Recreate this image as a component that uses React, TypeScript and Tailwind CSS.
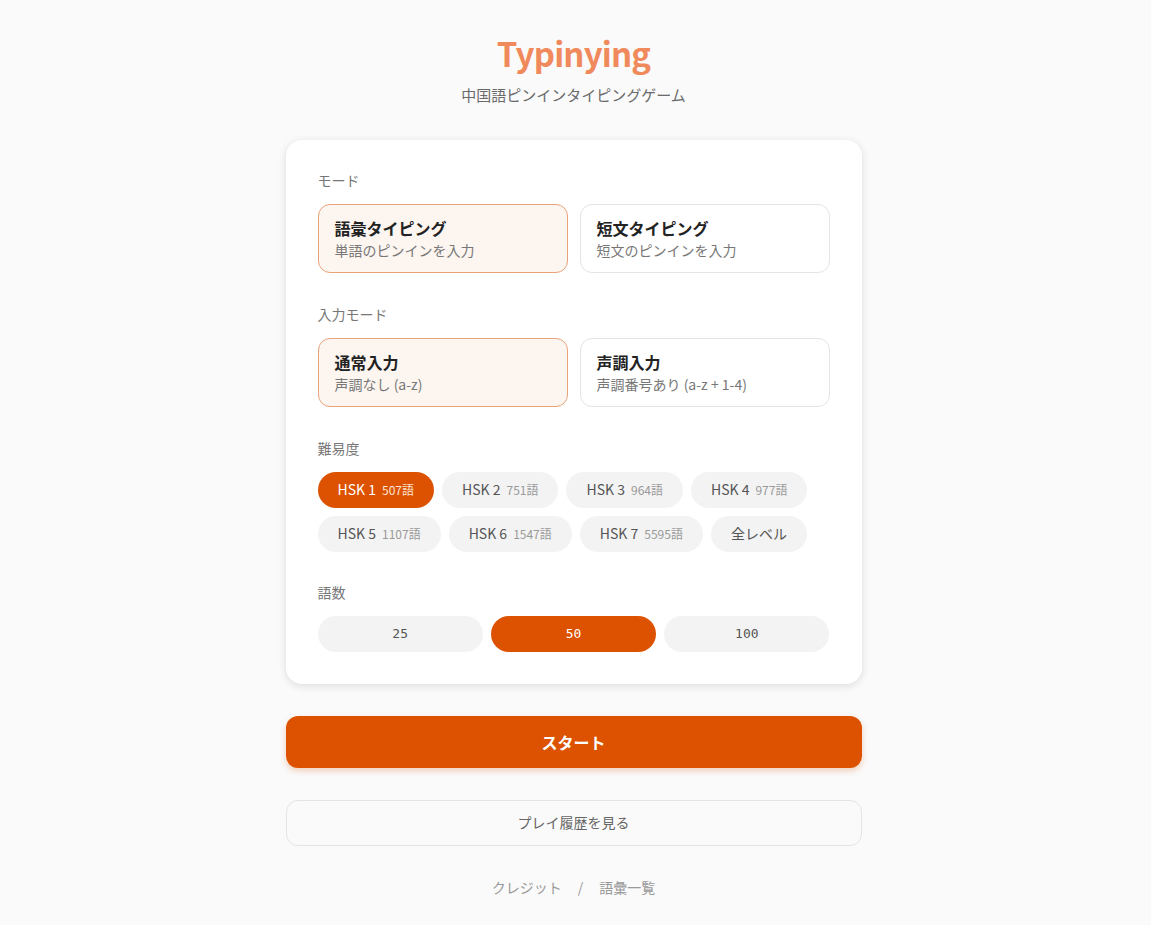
import { useState } from "react";

const modes = [
  { id: "vocab", title: "語彙タイピング", desc: "単語のピンインを入力" },
  { id: "sentence", title: "短文タイピング", desc: "短文のピンインを入力" },
];

const inputModes = [
  { id: "normal", title: "通常入力", desc: "声調なし (a-z)" },
  { id: "tone", title: "声調入力", desc: "声調番号あり (a-z + 1-4)" },
];

const levels = [
  { id: "1", label: "HSK 1", count: "507語" },
  { id: "2", label: "HSK 2", count: "751語" },
  { id: "3", label: "HSK 3", count: "964語" },
  { id: "4", label: "HSK 4", count: "977語" },
  { id: "5", label: "HSK 5", count: "1107語" },
  { id: "6", label: "HSK 6", count: "1547語" },
  { id: "7", label: "HSK 7", count: "5595語" },
  { id: "all", label: "全レベル", count: "" },
];

const counts = [25, 50, 100];

function OptionCard({
  title,
  desc,
  active,
  onClick,
}: {
  title: string;
  desc: string;
  active: boolean;
  onClick: () => void;
}) {
  return (
    <button
      onClick={onClick}
      className={`text-left rounded-xl border px-4 h-[69px] flex flex-col justify-center ${
        active
          ? "border-[#e9a27a] bg-[#fcf5f0]"
          : "border-[#e4e4e4] bg-white"
      }`}
    >
      <div className="text-[16px] font-bold text-[#222] leading-6">{title}</div>
      <div className="text-[14px] text-[#777] leading-5">{desc}</div>
    </button>
  );
}

export default function App() {
  const [mode, setMode] = useState("vocab");
  const [inputMode, setInputMode] = useState("normal");
  const [level, setLevel] = useState("1");
  const [count, setCount] = useState(50);

  return (
    <div
      className="min-h-screen bg-[#fafafa] flex flex-col items-center pt-[30px] pb-10 pr-[4px]"
      style={{ fontFamily: '"Noto Sans CJK JP", "Noto Sans", sans-serif' }}
    >
      <h1 className="text-[33px] font-semibold text-[#f08a5d] leading-[46px] tracking-tight">
        Typinying
      </h1>
      <p className="text-[15px] text-[#6a6a6a] mt-[8px]">中国語ピンインタイピングゲーム</p>

      <div className="w-[576px] mt-[33px] bg-white rounded-2xl shadow-[0_2px_8px_rgba(0,0,0,0.12)] px-8 pt-[30px] pb-8">
        <div className="text-[14px] text-[#777] leading-5">モード</div>
        <div className="grid grid-cols-2 gap-3 mt-[14px]">
          {modes.map((m) => (
            <OptionCard
              key={m.id}
              title={m.title}
              desc={m.desc}
              active={mode === m.id}
              onClick={() => setMode(m.id)}
            />
          ))}
        </div>

        <div className="text-[14px] text-[#777] leading-5 mt-[31px]">入力モード</div>
        <div className="grid grid-cols-2 gap-3 mt-[14px]">
          {inputModes.map((m) => (
            <OptionCard
              key={m.id}
              title={m.title}
              desc={m.desc}
              active={inputMode === m.id}
              onClick={() => setInputMode(m.id)}
            />
          ))}
        </div>

        <div className="text-[14px] text-[#777] leading-5 mt-[31px]">難易度</div>
        <div className="flex flex-wrap gap-2 mt-[14px]">
          {levels.map((l) => {
            const active = level === l.id;
            return (
              <button
                key={l.id}
                onClick={() => setLevel(l.id)}
                className={`h-9 rounded-full px-5 text-[14px] flex items-center gap-[6px] ${
                  active ? "bg-[#dc5200] text-white" : "bg-[#f3f3f3] text-[#555]"
                }`}
              >
                <span>{l.label}</span>
                {l.count && (
                  <span
                    className={`text-[12px] ${active ? "text-[#fde6d6]" : "text-[#999]"}`}
                  >
                    {l.count}
                  </span>
                )}
              </button>
            );
          })}
        </div>

        <div className="text-[14px] text-[#777] leading-5 mt-[30px]">語数</div>
        <div className="grid grid-cols-3 gap-2 mt-[14px]">
          {counts.map((c) => {
            const active = count === c;
            return (
              <button
                key={c}
                onClick={() => setCount(c)}
                className={`h-9 rounded-full text-[13px] ${
                  active ? "bg-[#dc5200] text-white" : "bg-[#f3f3f3] text-[#555]"
                }`}
                style={{ fontFamily: '"DejaVu Sans Mono", monospace' }}
              >
                {c}
              </button>
            );
          })}
        </div>
      </div>

      <button className="w-[576px] h-[52px] mt-8 rounded-xl bg-[#dc5200] text-white text-[16px] font-bold shadow-[0_3px_6px_rgba(220,82,0,0.25)]">
        スタート
      </button>

      <button className="w-[576px] h-[46px] mt-8 rounded-xl border border-[#e4e4e4] bg-[#fafafa] text-[14px] text-[#666]">
        プレイ履歴を見る
      </button>

      <div className="mt-[31px] text-[14px] text-[#999] flex items-center gap-4">
        <span>クレジット</span>
        <span>/</span>
        <span>語彙一覧</span>
      </div>
    </div>
  );
}
